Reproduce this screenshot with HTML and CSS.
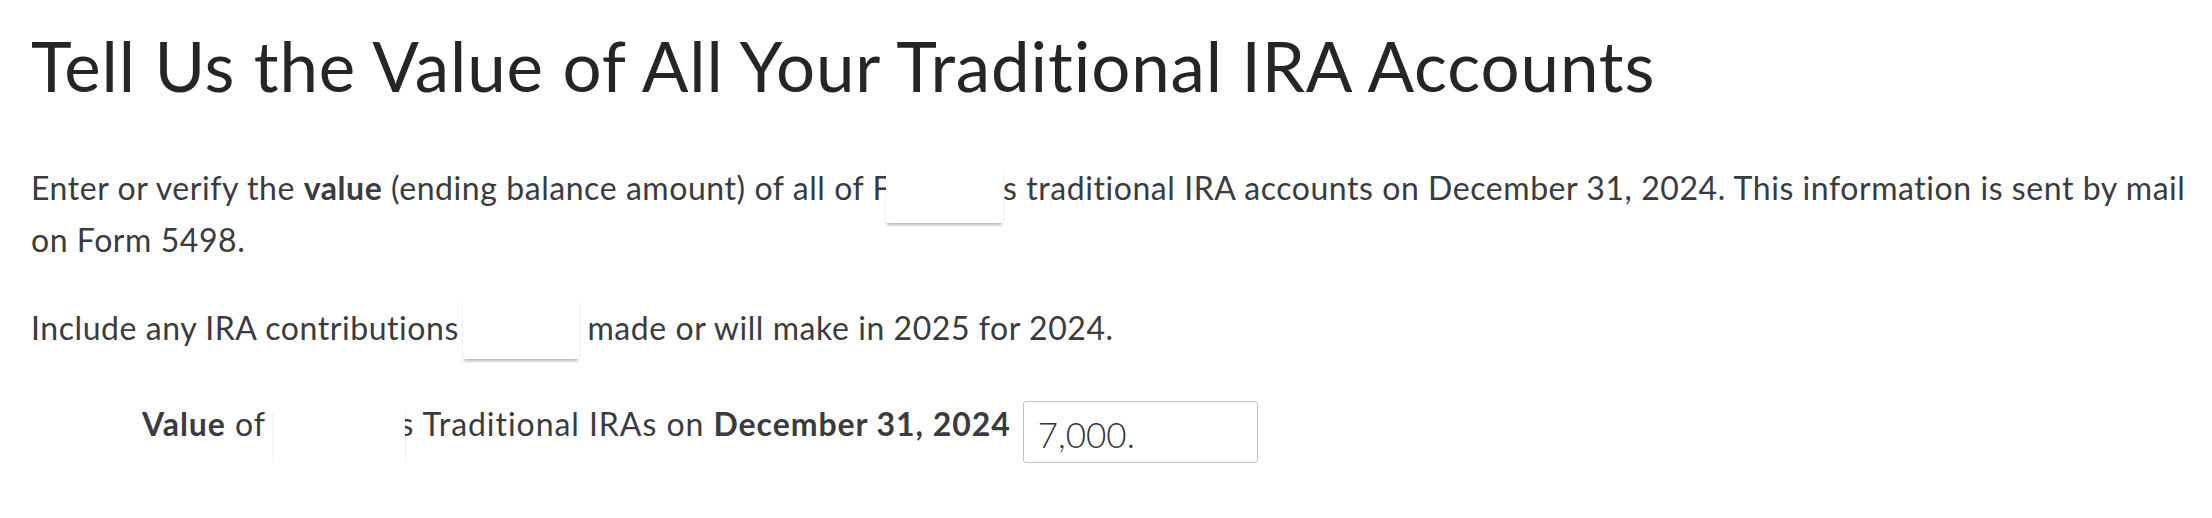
FILE: index.html
```html
<!DOCTYPE html>
<html lang="en">
<head>
<meta charset="utf-8">
<title>Traditional IRA Value</title>
<link rel="stylesheet" href="styles.css">
</head>
<body>
<main class="page">
  <h1 class="title">Tell Us the Value of All Your Traditional IRA Accounts</h1>
  <p class="para">Enter or verify the <strong>value</strong> (ending balance amount) of all of F<span class="mask mask-a"></span>s traditional IRA accounts on December 31, 2024. This information is sent by mail on Form 5498.</p>
  <p class="para">Include any IRA contributions <span class="mask mask-b"></span> made or will make in 2025 for 2024.</p>
  <div class="field">
    <label class="field-label" for="ira-value"><strong>Value</strong> of <span class="mask mask-c"></span>s Traditional IRAs on <strong>December 31, 2024</strong></label>
    <input class="field-input" id="ira-value" type="text" value="7,000.">
  </div>
</main>
</body>
</html>
```
FILE: styles.css
```css
html, body {
  margin: 0;
  padding: 0;
  background: #ffffff;
}

.page {
  padding: 24px 0 0 31px;
  font-family: Lato, "Liberation Sans", sans-serif;
  color: #3a3b3e;
}

.title {
  margin: 0 0 54px;
  font-size: 69px;
  font-weight: 400;
  letter-spacing: 0.9px;
  line-height: 84px;
  color: #222629;
}

.para {
  margin: 0 0 36px;
  font-size: 32px;
  letter-spacing: 0.56px;
  line-height: 52px;
}

.para strong,
.field-label strong {
  font-weight: 700;
}

.mask {
  display: inline-block;
  position: relative;
  height: 0;
  vertical-align: baseline;
}

.mask::after {
  content: "";
  position: absolute;
  left: 0;
  right: 0;
  background: #ffffff;
  box-shadow: 0 3px 3px -1px rgba(0, 0, 0, 0.3);
}

.mask-a {
  width: 117px;
  margin-left: -5px;
}
.mask-a::after {
  top: -32px;
  height: 55px;
}

.mask-b {
  width: 116px;
  margin-left: -5px;
}
.mask-b::after {
  top: -41px;
  height: 60px;
}

.mask-c {
  width: 131px;
  margin-right: -6px;
}
.mask-c::after {
  top: -29px;
  height: 63px;
}

.field {
  display: flex;
  align-items: flex-start;
  gap: 12px;
  padding: 8px 0 0 111px;
}

.field-label {
  font-size: 32px;
  letter-spacing: 0.95px;
  line-height: 52px;
}

.field-input {
  box-sizing: border-box;
  width: 235px;
  height: 62px;
  margin: 3px 0 0;
  padding: 4px 14px 0;
  border: 1px solid #c3c3c3;
  border-radius: 3px;
  font-family: Lato, "Liberation Sans", sans-serif;
  font-size: 35px;
  font-weight: 300;
  color: #333333;
  background: #ffffff;
  outline: none;
}
```
